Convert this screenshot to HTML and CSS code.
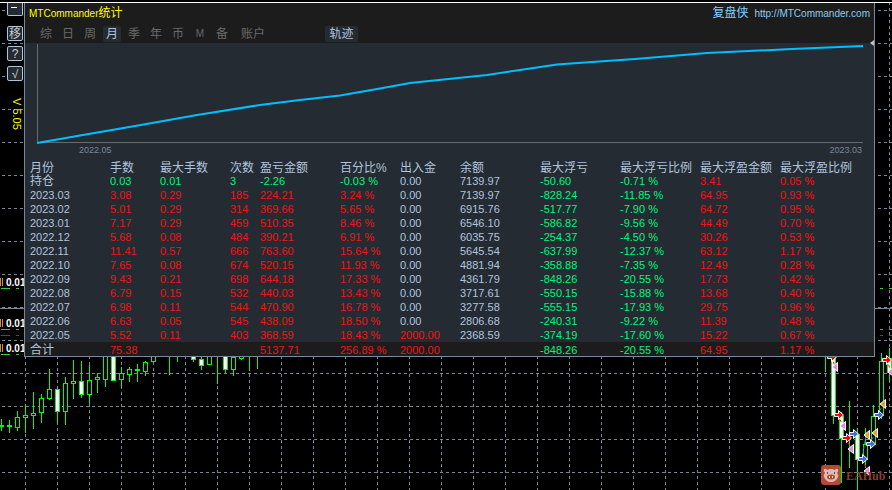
FILE: index.html
```html
<!DOCTYPE html>
<html lang="zh-CN">
<head>
<meta charset="utf-8">
<title>MTCommander统计</title>
<link rel="stylesheet" href="styles.css">
</head>
<body>
<svg class="canvas" aria-hidden="true">
  <defs>
    <pattern id="rows" width="6" height="33" patternUnits="userSpaceOnUse"><rect x="2" y="10" width="3" height="1" fill="#778899"/></pattern>
    <pattern id="cols" width="32" height="6" patternUnits="userSpaceOnUse"><rect x="25" y="2" width="1" height="3" fill="#778899"/></pattern>
    <path id="arrow" d="M-4.500-1.500h4v-3l5 4.500-5 4.500v-3h-4z" stroke="#fff"/>
    <path id="tri" d="M-3 0L2.500-4.500v9z" stroke="#fff"/>
  </defs>
  <rect width="100%" height="100%" fill="url(#rows)"/>
  <rect width="100%" height="100%" fill="url(#cols)"/>
  <rect y="308" width="100%" height="1" fill="#778899"/>
  <rect width="100%" height="2" fill="#000"/>
  <rect y="2" width="100%" height="1" fill="#fff"/>

  <g fill="#32cd32">
    <path d="M1 288h9v1h-9zM16 288h3v1h-3zM1 329h9v1h-9zM16 329h3v1h-3zM1 354h9v1h-9zM16 354h3v1h-3z"/>
    <path fill="#f00" d="M1 335h9v1h-9zM16 335h3v1h-3z"/>
  </g>
  <path fill="#d2893c" d="M0 278h1v8h-1zM2 278h1v8h-1zM0 319h1v8h-1zM2 319h1v8h-1zM0 344h1v8h-1zM2 344h1v8h-1z"/>
  <g class="lots">
    <text x="6" y="286">0.01</text>
    <text x="6" y="327">0.01</text>
    <text x="6" y="352">0.01</text>
  </g>

  <path class="wick" d="M1.500 419v12M9.500 420v13M17.500 411v20M25.500 404v29M33.500 392v37M41.500 394v29M49.500 369v31M57.500 387v36M65.500 377v48M73.500 360v39M81.500 361v37M89.500 365v39M97.500 373v20M105.500 350v37M121.500 367v21M129.500 367v15M137.500 364v18M145.500 361v15M153.500 350v13M169.500 350v25M177.500 350v12M193.500 350v12M201.500 357v13M209.500 350v15M217.500 350v34M225.500 350v23M233.500 350v26M241.500 350v10M249.500 350v21M257.500 350v19"/>
  <g class="bull">
    <rect x="-.5" y="425.500" width="4" height="1"/><rect x="7.500" y="425.500" width="4" height="1"/>
    <rect x="15.500" y="417.500" width="4" height="10"/><rect x="23.500" y="415.500" width="4" height="2"/>
    <rect x="31.500" y="413.500" width="4" height="2"/><rect x="39.500" y="398.500" width="4" height="14"/>
    <rect x="47.500" y="389.500" width="4" height="9"/><rect x="63.500" y="383.500" width="4" height="28"/>
    <rect x="71.500" y="381.500" width="4" height="2"/><rect x="87.500" y="380.500" width="4" height="14"/>
    <rect x="95.500" y="377.500" width="4" height="2"/><rect x="103.500" y="345.500" width="4" height="34"/>
    <rect x="119.500" y="373.500" width="4" height="6"/><rect x="127.500" y="369.500" width="4" height="5"/>
    <rect x="135.500" y="369.500" width="4" height="1"/><rect x="143.500" y="362.500" width="4" height="9"/>
    <rect x="151.500" y="350.500" width="4" height="11"/><rect x="207.500" y="350.500" width="4" height="14"/>
    <rect x="231.500" y="357.500" width="4" height="12"/><rect x="239.500" y="350.500" width="4" height="8"/>
  </g>
  <g class="bear">
    <rect x="55.500" y="389.500" width="4" height="22"/><rect x="79.500" y="381.500" width="4" height="13"/>
    <rect x="111.500" y="350.500" width="4" height="30"/><rect x="191.500" y="350.500" width="4" height="9"/>
    <rect x="199.500" y="359.500" width="4" height="6"/><rect x="223.500" y="350.500" width="4" height="19"/>
  </g>

  <svg x="100%" overflow="visible"><g transform="translate(-892 0)">
    <path fill="#32cd32" d="M880 288h3v1h-3zM889 288h3v1h-3zM880 329h3v1h-3zM889 329h3v1h-3z"/>
    <path fill="#f00" d="M880 335h3v1h-3zM889 335h3v1h-3z"/>
    <path class="wick" d="M825.500 350v22M833.500 350v74M841.500 412v71M849.500 401v67M857.500 428v62M865.500 428v40M873.500 405v40M881.500 353v66M889.500 348v33"/>
    <g class="bull">
      <rect x="863.500" y="444.500" width="4" height="15"/><rect x="871.500" y="416.500" width="4" height="28"/><rect x="879.500" y="361.500" width="4" height="54"/>
    </g>
    <g class="bear">
      <rect x="831.500" y="350.500" width="4" height="65"/><rect x="839.500" y="416.500" width="4" height="22"/><rect x="855.500" y="434.500" width="4" height="25"/><rect x="887.500" y="358.500" width="4" height="14"/>
    </g>
    <path fill="none" stroke="#f00" stroke-dasharray="3 2" d="M832 357l3 10M838 415l5 11M846 438l5 11M863 459l4 12M887 360l4 12"/>
    <path fill="none" stroke="#4169e1" stroke-dasharray="3 2" d="M862 459l4-24M870 444l5-11M878 415l5-11"/>
    <g fill="#f00"><use href="#arrow" x="832" y="357"/><use href="#arrow" x="839" y="415"/><use href="#arrow" x="847" y="438"/><use href="#arrow" x="887" y="360"/></g>
    <g fill="#4169e1"><use href="#arrow" x="854" y="434"/><use href="#arrow" x="863" y="459"/><use href="#arrow" x="871" y="444"/><use href="#arrow" x="879" y="415"/></g>
    <g fill="#ee82ee"><use href="#tri" x="835" y="367"/><use href="#tri" x="843" y="426"/><use href="#tri" x="851" y="449"/><use href="#tri" x="867" y="471"/><use href="#tri" x="891" y="372"/></g>
    <g fill="#daa520"><use href="#tri" x="867" y="435"/><use href="#tri" x="875" y="433"/><use href="#tri" x="883" y="404"/></g>
    <rect x="821" y="465" width="20" height="20" rx="3" fill="#b24a34"/>
    <path fill="#d9bcb2" d="M824 469q2-1 3 1 4-2 8 0 1-2 3-1 1 2-1 4 2 2 1 4-2 5-7 5t-7-5q-1-2 1-4-2-2-1-4z"/>
    <ellipse cx="831" cy="477" rx="4" ry="2.500" fill="#b24a34"/>
    <path fill="#efe0da" d="M829 476h1v2h-1zM832 476h1v2h-1z"/>
    <path fill="#7c3a2c" d="M827 472h1v2h-1zM834 472h1v2h-1z"/>
    <text class="brand" x="846" y="480">EAHub</text>
  </g></svg>
</svg>

<main class="layout">
  <aside class="rail">
    <button class="tool tool-min" aria-label="最小化"><span class="minus"></span></button>
    <button class="tool">移</button>
    <button class="tool">?</button>
    <button class="tool">√</button>
    <div class="version">V 5.05</div>
  </aside>

  <section class="panel">
    <header class="head">
      <div class="titlebar">
        <h1 class="title">MTCommander<span class="cjk">统计</span></h1>
        <a class="site" href="#"><span class="cjk">复盘侠</span><span>http://MTCommander.com</span></a>
      </div>
      <nav class="tabs">
        <button class="tab">综</button><button class="tab">日</button><button class="tab">周</button><button class="tab active">月</button><button class="tab">季</button><button class="tab">年</button><button class="tab">币</button><button class="tab latin">M</button><button class="tab">备</button><button class="tab wide">账户</button>
        <button class="tab wide active track">轨迹</button>
      </nav>
    </header>

    <div class="equity">
      <svg class="curve" viewBox="25 43 849 102" preserveAspectRatio="none" role="img" aria-label="余额">
        <path class="axis" d="M37.500 44V142.500H863"/>
        <path class="line" d="M37 143L80 135.500L138 125.500L197 115L260 105L300 100L340 95.500L380 88.500L410 83L487 75L520 70L557 64.500L592 62L635 59L707 53L792 49L863 46"/>
      </svg>
      <div class="dates"><span>2022.05</span><span>2023.03</span></div>
      <span class="pointer"></span>
    </div>

    <table class="stats">
      <colgroup><col class="w80"><col class="w50"><col class="w70"><col class="w30"><col class="w80"><col class="w60"><col class="w60"><col class="w80"><col class="w80"><col class="w80"><col class="w80"><col></colgroup>
      <thead><tr><th>月份</th><th>手数</th><th>最大手数</th><th>次数</th><th>盈亏金额</th><th>百分比%</th><th>出入金</th><th>余额</th><th>最大浮亏</th><th>最大浮亏比例</th><th>最大浮盈金额</th><th>最大浮盈比例</th></tr></thead>
      <tbody>
        <tr class="open"><td class="cjk">持仓</td><td>0.03</td><td>0.01</td><td>3</td><td>-2.26</td><td>-0.03 %</td><td>0.00</td><td>7139.97</td><td>-50.60</td><td>-0.71 %</td><td>3.41</td><td>0.05 %</td></tr>
        <tr><td>2023.03</td><td>3.08</td><td>0.29</td><td>185</td><td>224.21</td><td>3.24 %</td><td>0.00</td><td>7139.97</td><td>-828.24</td><td>-11.85 %</td><td>64.95</td><td>0.93 %</td></tr>
        <tr><td>2023.02</td><td>5.01</td><td>0.29</td><td>314</td><td>369.66</td><td>5.65 %</td><td>0.00</td><td>6915.76</td><td>-517.77</td><td>-7.90 %</td><td>64.72</td><td>0.95 %</td></tr>
        <tr><td>2023.01</td><td>7.17</td><td>0.29</td><td>459</td><td>510.35</td><td>8.46 %</td><td>0.00</td><td>6546.10</td><td>-586.82</td><td>-9.56 %</td><td>44.49</td><td>0.70 %</td></tr>
        <tr><td>2022.12</td><td>5.68</td><td>0.08</td><td>484</td><td>390.21</td><td>6.91 %</td><td>0.00</td><td>6035.75</td><td>-254.37</td><td>-4.50 %</td><td>30.26</td><td>0.53 %</td></tr>
        <tr><td>2022.11</td><td>11.41</td><td>0.57</td><td>666</td><td>763.60</td><td>15.64 %</td><td>0.00</td><td>5645.54</td><td>-637.99</td><td>-12.37 %</td><td>63.12</td><td>1.17 %</td></tr>
        <tr><td>2022.10</td><td>7.65</td><td>0.08</td><td>674</td><td>520.15</td><td>11.93 %</td><td>0.00</td><td>4881.94</td><td>-358.88</td><td>-7.35 %</td><td>12.49</td><td>0.28 %</td></tr>
        <tr><td>2022.09</td><td>9.43</td><td>0.21</td><td>698</td><td>644.18</td><td>17.33 %</td><td>0.00</td><td>4361.79</td><td>-848.26</td><td>-20.55 %</td><td>17.73</td><td>0.42 %</td></tr>
        <tr><td>2022.08</td><td>6.79</td><td>0.15</td><td>532</td><td>440.03</td><td>13.43 %</td><td>0.00</td><td>3717.61</td><td>-550.15</td><td>-15.88 %</td><td>13.68</td><td>0.40 %</td></tr>
        <tr><td>2022.07</td><td>6.98</td><td>0.11</td><td>544</td><td>470.90</td><td>16.78 %</td><td>0.00</td><td>3277.58</td><td>-555.15</td><td>-17.93 %</td><td>29.75</td><td>0.96 %</td></tr>
        <tr><td>2022.06</td><td>6.63</td><td>0.05</td><td>545</td><td>438.09</td><td>18.50 %</td><td>0.00</td><td>2806.68</td><td>-240.31</td><td>-9.22 %</td><td>11.39</td><td>0.48 %</td></tr>
        <tr><td>2022.05</td><td>5.52</td><td>0.11</td><td>403</td><td>368.59</td><td>18.43 %</td><td class="up">2000.00</td><td>2368.59</td><td>-374.19</td><td>-17.60 %</td><td>15.22</td><td>0.67 %</td></tr>
      </tbody>
      <tfoot><tr><td class="cjk">合计</td><td>75.38</td><td></td><td></td><td>5137.71</td><td>256.89 %</td><td class="up">2000.00</td><td></td><td>-848.26</td><td>-20.55 %</td><td>64.95</td><td>1.17 %</td></tr></tfoot>
    </table>
  </section>
</main>
</body>
</html>
```
FILE: styles.css
```css
* { box-sizing: border-box; }

body {
  margin: 0;
  background: #000;
  color: #b0c4de;
  font: 11px/14px "Liberation Sans", "Noto Sans CJK SC", sans-serif;
  overflow: hidden;
}

button {
  padding: 0;
  border: 0;
  font: inherit;
  color: inherit;
  background: none;
}

.cjk { font-size: 12px; }

/* price chart behind the panel */
.canvas {
  position: absolute;
  inset: 0;
  width: 100%;
  height: 100vh;
}
.wick { stroke: #0f0; fill: none; }
.bull rect { stroke: #0f0; fill: #000; }
.bear rect { stroke: #0f0; fill: #fff; }
.lots { fill: #fff; font-size: 10px; font-weight: bold; }
.brand { fill: #8a3e2b; font: bold 12px "Liberation Serif", serif; }

.layout {
  position: relative;
  display: grid;
  grid-template-columns: 24px 1fr;
  align-items: start;
  padding: 3px 17px 0 0;
}

/* left tool strip */
.rail {
  display: flex;
  flex-direction: column;
  align-items: flex-end;
  gap: 5px;
  padding-right: 1px;
}
.tool {
  width: 16px;
  height: 15px;
  border: 1px solid #b0c4de;
  border-radius: 2px;
  background: #252b33;
  color: #c8ccd2;
  font-size: 12px;
  line-height: 12px;
}
.tool-min {
  height: 13px;
  margin-bottom: 5px;
  border-top: 0;
  border-radius: 0 0 2px 2px;
}
.minus {
  display: block;
  width: 6px;
  height: 1px;
  margin: 0 auto 3px 3px;
  background: #fff;
}
.version {
  margin-top: 12px;
  line-height: 12px;
  color: #ff0;
  writing-mode: vertical-rl;
}

/* statistics panel */
.panel {
  min-width: 0;
  border: 1px solid #778899;
  border-top: 0;
  background: #252b33;
}
.head {
  height: 40px;
  background: #1c1c1c;
}
.titlebar {
  display: flex;
  justify-content: space-between;
  height: 23px;
  padding: 2px 4px 0;
  font-size: 10px;
  line-height: 16px;
}
.title {
  margin: 0;
  font-size: 10px;
  font-weight: normal;
  color: #ff0;
}
.site {
  display: flex;
  align-items: baseline;
  gap: 6px;
  color: #87cefa;
  text-decoration: none;
}
.tabs {
  display: flex;
  gap: 4px;
  padding-left: 12px;
}
.tab {
  width: 18px;
  height: 16px;
  border-radius: 2px;
  color: #696969;
  font-size: 12px;
  line-height: 16px;
}
.latin { font-size: 10px; }
.wide { width: 36px; }
.active { background: #252b33; color: #b0c4de; }
.track { width: 33px; margin-left: 50px; }

.equity {
  position: relative;
  height: 117px;
}
.curve {
  display: block;
  width: 100%;
  height: 102px;
}
.axis, .line {
  fill: none;
  vector-effect: non-scaling-stroke;
}
.axis { stroke: #696969; }
.line { stroke: #00bfff; stroke-width: 2px; }
.dates {
  display: flex;
  justify-content: space-between;
  padding: 0 12px 0 54px;
  color: #778899;
  font-size: 9px;
  line-height: 10px;
}
.pointer {
  position: absolute;
  top: -3px;
  right: 0;
  border: 3px solid transparent;
  border-left: 0;
  border-right: 4px solid #c0c0c0;
}

.stats {
  width: 100%;
  table-layout: fixed;
  border-collapse: collapse;
}
.w80 { width: 80px; }
.w70 { width: 70px; }
.w60 { width: 60px; }
.w50 { width: 50px; }
.w30 { width: 30px; }
th, td {
  height: 14px;
  padding: 0 0 0 5px;
  line-height: 14px;
  text-align: left;
  white-space: nowrap;
  color: #f01414;
}
th {
  font-size: 12px;
  font-weight: normal;
  color: #b0c4de;
}
th, tfoot td {
  padding-top: 2px;
  line-height: 12px;
}
td:nth-child(1), td:nth-child(7), td:nth-child(8) { color: #b0c4de; }
td:nth-child(9), td:nth-child(10),
.open td:nth-child(n+2):nth-child(-n+6) { color: #00f57a; }
td.up { color: #f01414; }
tfoot { background: #1c1c1c; }
```
